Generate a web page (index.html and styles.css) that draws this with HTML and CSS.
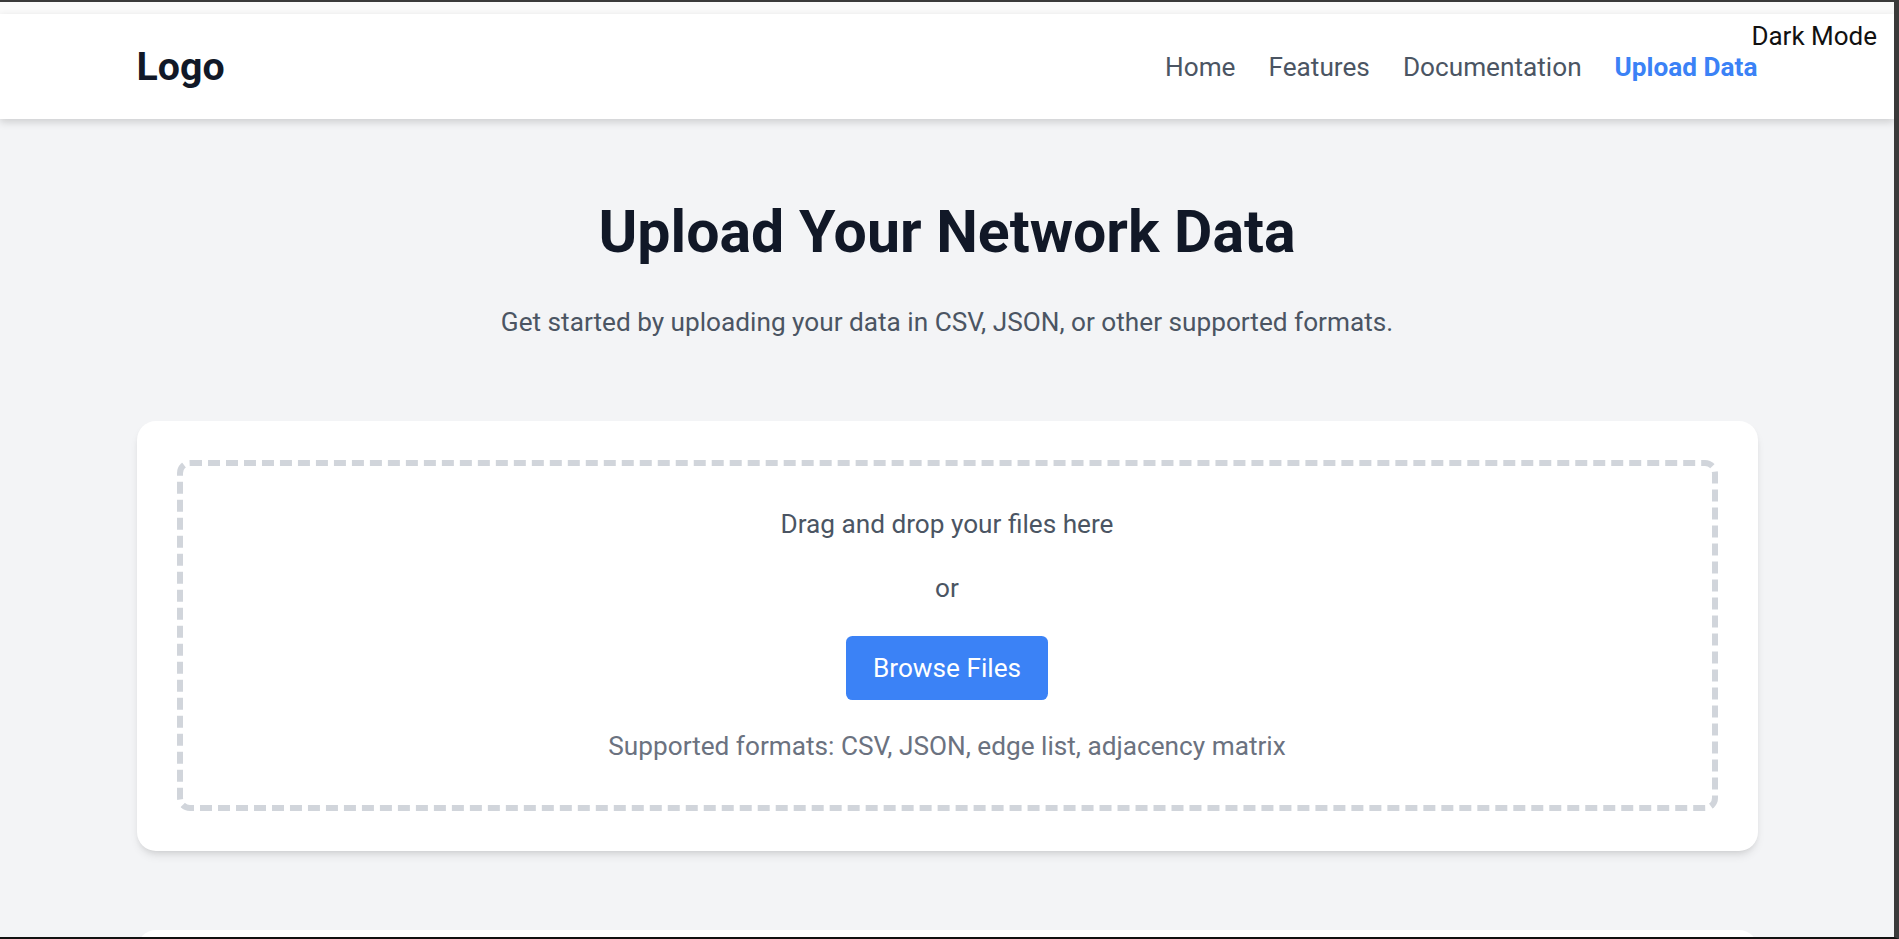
FILE: index.html
```html
<!DOCTYPE html>
<html lang="en">
<head>
<meta charset="utf-8">
<title>Upload Your Network Data</title>
<link rel="stylesheet" href="styles.css">
</head>
<body>
<div class="window-frame"></div>
<button class="theme-toggle" type="button">Dark Mode</button>
<div class="topbar"></div>
<header class="site-header">
  <div class="container header-inner">
    <div class="logo">Logo</div>
    <nav class="nav">
      <a href="#" class="nav-link">Home</a>
      <a href="#" class="nav-link">Features</a>
      <a href="#" class="nav-link">Documentation</a>
      <a href="#" class="nav-link active">Upload Data</a>
    </nav>
  </div>
</header>
<main class="container main">
  <section class="hero">
    <h1 class="hero-title">Upload Your Network Data</h1>
    <p class="hero-sub">Get started by uploading your data in CSV, JSON, or other supported formats.</p>
  </section>
  <section class="card upload-card">
    <div class="dropzone">
      <p class="drop-text">Drag and drop your files here</p>
      <p class="drop-or">or</p>
      <button class="browse-btn" type="button">Browse Files</button>
      <p class="drop-formats">Supported formats: CSV, JSON, edge list, adjacency matrix</p>
    </div>
  </section>
  <section class="card next-card"></section>
</main>
</body>
</html>
```
FILE: styles.css
```css
html {
  scrollbar-width: none;
  background: #f3f4f6;
}
html::-webkit-scrollbar { display: none; }

body {
  margin: 2px 5px 0 0;
  position: relative;
  background: #f3f4f6;
  font-family: Roboto, "Liberation Sans", Arial, sans-serif;
  color: #111827;
}

.window-frame {
  position: fixed;
  inset: 0;
  border-top: 2px solid #3a3a3a;
  border-right: 5px solid #3a3a3a;
  border-bottom: 2px solid #111111;
  pointer-events: none;
  z-index: 50;
}

.theme-toggle {
  position: absolute;
  top: 15px;
  right: 17px;
  z-index: 20;
  background: none;
  border: 0;
  padding: 0;
  font-family: Roboto, "Liberation Sans", Arial, sans-serif;
  font-size: 26px;
  line-height: 38.4px;
  color: #111111;
  cursor: pointer;
}

.topbar {
  height: 12px;
  background: #fafafa;
}

.site-header {
  background: #ffffff;
  height: 105px;
  box-sizing: border-box;
  padding-top: 2px;
  box-shadow: 0 3px 8px rgba(0, 0, 0, 0.16);
  position: relative;
  z-index: 5;
}

.container {
  max-width: 1621px;
  margin: 0 auto;
}

.header-inner {
  height: 100%;
  display: flex;
  align-items: center;
  justify-content: space-between;
}

.logo {
  font-size: 39.3px;
  font-weight: 700;
  color: #111827;
  line-height: 1;
}

.nav {
  display: flex;
  gap: 33px;
  align-items: center;
}

.nav-link {
  font-size: 26.2px;
  color: #4b5563;
  text-decoration: none;
  line-height: 38.4px;
}

.nav-link.active {
  color: #3b82f6;
  font-weight: 700;
}

.main {
  padding-top: 76px;
}

.hero {
  text-align: center;
}

.hero-title {
  margin: 0 0 32.5px;
  font-size: 59px;
  line-height: 73.7px;
  font-weight: 700;
  color: #111827;
}

.hero-sub {
  margin: 0 0 76.5px;
  font-size: 26.2px;
  line-height: 43.2px;
  color: #4b5563;
}

.card {
  background: #ffffff;
  border-radius: 19px;
  box-shadow: 0 6px 10px -2px rgba(0, 0, 0, 0.1), 0 3px 6px -3px rgba(0, 0, 0, 0.1);
}

.upload-card {
  padding: 39px 40px 40px;
  margin-bottom: 79px;
}

.dropzone {
  border: 6px dashed #d1d5db;
  border-radius: 13px;
  padding: 39px 20px 40px;
  text-align: center;
  font-size: 26.2px;
  line-height: 38.4px;
}

.drop-text {
  margin: 0 0 25.6px;
  color: #4b5563;
}

.drop-or {
  margin: 0 0 28.6px;
  color: #4b5563;
}

.browse-btn {
  display: block;
  margin: 0 auto;
  padding: 13px 26.5px;
  background: #3b82f6;
  color: #ffffff;
  border: 0;
  border-radius: 6.4px;
  font-family: Roboto, "Liberation Sans", Arial, sans-serif;
  font-size: 26.2px;
  line-height: 38.4px;
  cursor: pointer;
}

.drop-formats {
  margin: 26.5px 0 0;
  color: #6b7280;
}

.next-card {
  height: 400px;
  margin-bottom: 60px;
}
```
